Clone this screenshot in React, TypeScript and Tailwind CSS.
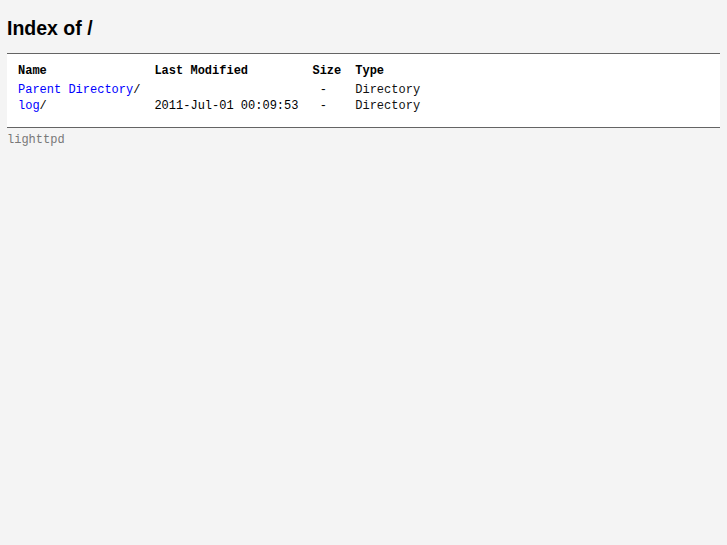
export default function App() {
  const mono = "font-['Liberation_Mono','Courier_New',monospace] text-[12px]"
  const rows = [
    { name: 'Parent Directory', modified: '', size: '-', type: 'Directory' },
    { name: 'log', modified: '2011-Jul-01 00:09:53', size: '-', type: 'Directory' },
  ]

  return (
    <div className="min-h-screen bg-[#f4f4f4] px-[7px] pt-[17px] text-black font-['Liberation_Sans',Arial,sans-serif]">
      <h2 className="text-[19.5px] leading-[22px] font-bold mb-[14px]">Index of /</h2>

      {/* listing */}
      <div className="bg-white border-t border-b border-[#646464] pt-[9px] pb-[13px]">
        <table className={`ml-[11px] border-collapse ${mono}`}>
          <thead>
            <tr>
              <th className="text-left font-bold pr-[14px] pb-[4px] pt-[1px] leading-[14px]">Name</th>
              <th className="text-left font-bold pr-[14px] pb-[4px] pt-[1px] leading-[14px]">Last Modified</th>
              <th className="text-right font-bold pr-[14px] pb-[4px] pt-[1px] leading-[14px]">Size</th>
              <th className="text-left font-bold pr-[14px] pb-[4px] pt-[1px] leading-[14px]">Type</th>
            </tr>
          </thead>
          <tbody>
            {rows.map((r) => (
              <tr key={r.name}>
                <td className="pr-[14px] py-[1px] leading-[14px] whitespace-pre">
                  <a className="text-[#0000ff] no-underline">{r.name}</a>/
                </td>
                <td className="pr-[14px] py-[1px] leading-[14px] whitespace-pre">{r.modified}</td>
                <td className="pr-[14px] py-[1px] leading-[14px] text-right">{r.size}&nbsp;&nbsp;</td>
                <td className="pr-[14px] py-[1px] leading-[14px] text-[#111]">{r.type}</td>
              </tr>
            ))}
          </tbody>
        </table>
      </div>

      <div className={`${mono} text-[#787878] pt-[5px] leading-[14px]`}>lighttpd</div>
    </div>
  )
}
